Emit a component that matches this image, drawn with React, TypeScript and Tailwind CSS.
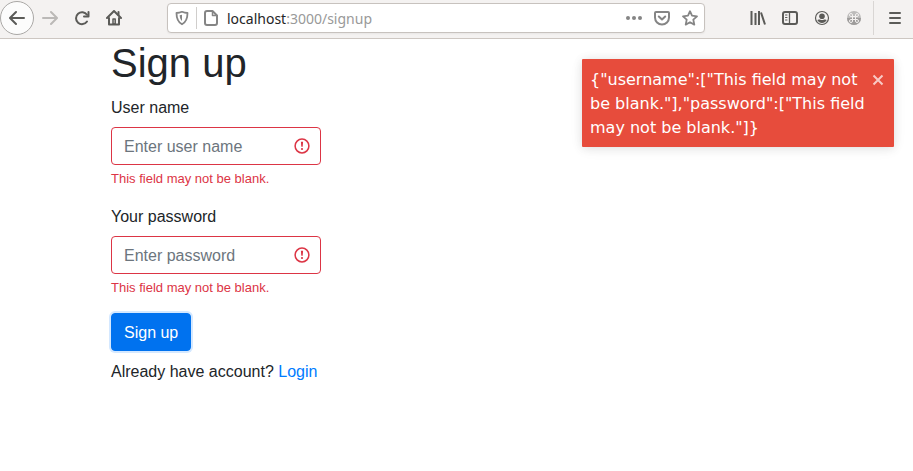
import { useId, useState, type ReactNode } from "react";

type IconButtonProps = { label: string; className?: string; children: ReactNode };

function IconButton({ label, className = "w-8", children }: IconButtonProps) {
  return (
    <button type="button" aria-label={label} className={`flex h-8 shrink-0 items-center justify-center ${className}`}>
      {children}
    </button>
  );
}

const stroke = {
  width: 16,
  height: 16,
  viewBox: "0 0 16 16",
  fill: "none",
  stroke: "currentColor",
  strokeWidth: 2,
  strokeLinecap: "round" as const,
  strokeLinejoin: "round" as const,
};

function Toolbar() {
  return (
    <header className="flex h-[39px] items-start border-b border-[#cdc7c2] bg-[#f4f2f1] pt-px text-[#5b5b58]">
      <button
        type="button"
        aria-label="Back"
        className="flex size-[34px] shrink-0 items-center justify-center rounded-full border border-[#aaa8a6] bg-[#fcfcfc]"
      >
        <svg {...stroke}>
          <path d="M15 8H1.500M7 2L1 8l6 6" />
        </svg>
      </button>
      <div className="flex pt-px">
        <IconButton label="Forward">
          <svg {...stroke} className="text-[#bbb9b7]">
            <path d="M1 8h13.500M9 2l6 6-6 6" />
          </svg>
        </IconButton>
        <IconButton label="Reload">
          <svg {...stroke}>
            <path d="M13 11.500A6 6 0 1 1 13 4.800" />
            <path d="M14.500 2v4.500H10" />
          </svg>
        </IconButton>
        <IconButton label="Home">
          <svg {...stroke}>
            <path d="M1 8l7-7 7 7" />
            <path d="M3 8v6.500h10V8" />
            <path d="M12.500 2v3" />
            <path d="M7 9h2.200v5H7z" strokeWidth="1.500" />
          </svg>
        </IconButton>
      </div>
      <div className="mx-[37px] mt-0.5 flex h-[30px] min-w-0 flex-1 items-center rounded border border-[#c7c2be] bg-white pl-1.5 text-[#858585] shadow-xs">
        <svg {...stroke} className="shrink-0">
          <path d="M8 1.800c1.800.8 3.700 1.200 5.500 1.200 0 5.600-1.200 9-5.500 11.300C3.700 12 2.500 8.600 2.500 3 4.300 3 6.200 2.600 8 1.800z" strokeWidth="1.800" />
          <path d="M8 4.800v6.200C6.300 9.700 5.800 7.600 5.700 5.300z" fill="currentColor" stroke="none" />
        </svg>
        <span className="mx-1.5 h-[22px] w-px shrink-0 bg-[#d0cecc]" />
        <svg {...stroke} className="shrink-0">
          <path d="M4 1h5.500L14 5.500V13a2 2 0 0 1-2 2H4a2 2 0 0 1-2-2V3a2 2 0 0 1 2-2z" />
          <path d="M9.500 1.500V5.500H13.500" strokeWidth="1.500" />
        </svg>
        <div className="ml-2 min-w-0 flex-1 truncate pt-px font-['Noto_Sans',sans-serif] text-[14px] leading-5 text-[#999]">
          <span className="text-[#252525]">localhost</span>:3000/signup
        </div>
        <div className="flex">
          <IconButton label="Page actions" className="w-7">
            <svg width="16" height="16" viewBox="0 0 16 16" fill="currentColor">
              <circle cx="2" cy="8" r="2" />
              <circle cx="8" cy="8" r="2" />
              <circle cx="14" cy="8" r="2" />
            </svg>
          </IconButton>
          <IconButton label="Save to Pocket" className="w-7">
            <svg {...stroke}>
              <path d="M2 2h12a1 1 0 0 1 1 1v4.500a7 7 0 0 1-14 0V3a1 1 0 0 1 1-1z" />
              <path d="M4.800 6.500L8 9.500l3.200-3" />
            </svg>
          </IconButton>
          <IconButton label="Bookmark this page" className="w-7">
            <svg {...stroke}>
              <path d="M8 1.200l2 4.500 5 .6-3.700 3.300 1 5L8 12.200l-4.300 2.400 1-5L1 6.300l5-.6z" strokeWidth="1.800" />
            </svg>
          </IconButton>
        </div>
      </div>
      <div className="flex pt-px">
        <IconButton label="Library">
          <svg {...stroke} strokeLinecap="butt">
            <path d="M1.500 1v14M5.500 3v12M9 1v14M11 2.500l4 12" />
          </svg>
        </IconButton>
        <IconButton label="Sidebars">
          <svg {...stroke}>
            <rect x="1" y="2" width="14" height="12" rx="2" />
            <path d="M7.500 2v12" strokeWidth="1.300" />
            <path d="M3.500 5h1.500M3.500 7.500h1.500M3.500 10h1.500" strokeWidth="1" />
          </svg>
        </IconButton>
        <IconButton label="Account">
          <svg {...stroke}>
            <circle cx="8" cy="8" r="6.500" strokeWidth="1.200" />
            <circle cx="8" cy="6.200" r="2.800" fill="currentColor" stroke="none" />
            <path d="M3.300 10c1.200-.5 2-.6 2.700-.6.800.9 3.200.9 4 0 .7 0 1.500.1 2.700.6-1 2-2.700 3-4.700 3s-3.700-1-4.700-3z" fill="currentColor" stroke="none" />
          </svg>
        </IconButton>
        <IconButton label="Extension">
          <svg width="16" height="16" viewBox="0 0 16 16" fill="none">
            <circle cx="8" cy="8" r="7" fill="#bdbcbb" />
            <path d="M1 8a7 7 0 0 0 14 0z" fill="#9e9c9b" />
            <path
              d="M6.500 6.500h3v3h-3zM6.500 6.500H5a1.500 1.500 0 1 1 1.500-1.500zM9.500 6.500V5a1.500 1.500 0 1 1 1.500 1.500zM6.500 9.500V11A1.500 1.500 0 1 1 5 9.500zM9.500 9.500H11A1.500 1.500 0 1 1 9.500 11z"
              stroke="#f4f2f1"
            />
          </svg>
        </IconButton>
      </div>
      <span className="mx-[3px] h-[34px] w-px shrink-0 bg-[#d9d6d4]" />
      <div className="pt-px">
        <IconButton label="Open menu" className="w-9">
          <svg {...stroke}>
            <path d="M3 3h10M3 8h10M3 13h10" />
          </svg>
        </IconButton>
      </div>
    </header>
  );
}

type FieldProps = { label: string; type: string; placeholder: string; error: string };

function Field({ label, type, placeholder, error }: FieldProps) {
  const id = useId();
  return (
    <div className="mb-4">
      <label htmlFor={id} className="mb-1.5 block leading-[26px]">
        {label}
      </label>
      <div className="relative">
        <input
          id={id}
          type={type}
          placeholder={placeholder}
          aria-invalid="true"
          aria-describedby={`${id}-error`}
          className="block h-[38px] w-full rounded border border-[#dc3545] bg-white pt-0.5 pr-9 pl-3 text-base text-[#495057] outline-none placeholder:text-[#6c757d]"
        />
        <svg
          className="pointer-events-none absolute inset-y-0 right-[11px] my-auto text-[#dc3545]"
          width="16"
          height="16"
          viewBox="0 0 16 16"
          fill="none"
        >
          <circle cx="8" cy="8" r="6.900" stroke="currentColor" strokeWidth="1.500" />
          <path d="M6.900 3.800h2.200l-.4 5H7.300z" fill="currentColor" />
          <circle cx="8" cy="11" r="1.100" fill="currentColor" />
        </svg>
      </div>
      <p id={`${id}-error`} className="mt-1 text-[13px] leading-[19px] text-[#dc3545]">
        {error}
      </p>
    </div>
  );
}

function Toast({ message, onClose }: { message: string; onClose: () => void }) {
  return (
    <div
      role="alert"
      className="absolute top-5 right-[19px] flex w-[312px] items-start rounded-[1px] bg-[#e74c3c] px-2 pt-[9px] pb-[7px] font-['DejaVu_Sans',sans-serif] text-base text-white shadow-[0_1px_10px_rgba(0,0,0,0.1),0_2px_15px_rgba(0,0,0,0.05)]"
    >
      <p className="min-w-0 flex-1">{message}</p>
      <button type="button" aria-label="Close" onClick={onClose} className="mt-1.5 mr-0.5 text-white/70">
        <svg width="12" height="12" viewBox="0 0 12 12" stroke="currentColor" strokeWidth="2">
          <path d="M1.500 1.500l9 9M10.500 1.500l-9 9" />
        </svg>
      </button>
    </div>
  );
}

export default function App() {
  const [toastOpen, setToastOpen] = useState(true);
  const blank = "This field may not be blank.";
  return (
    <div className="min-h-screen bg-white font-['Liberation_Sans',Arial,sans-serif] text-base text-[#212529]">
      <Toolbar />
      <div className="relative">
        <main className="mx-auto max-w-[721px] px-[15px]">
          <div className="w-[210px]">
            <h1 className="mb-2 text-[40px] leading-[48px]">Sign up</h1>
            <form noValidate onSubmit={(event) => event.preventDefault()}>
              <Field label="User name" type="text" placeholder="Enter user name" error={blank} />
              <Field label="Your password" type="password" placeholder="Enter password" error={blank} />
              <button
                type="submit"
                className="block h-[38px] rounded border border-[#0072ef] bg-[#0072ef] px-3 pt-0.5 text-white shadow-[0_0_0_2px_#d4e8ff] outline-none"
              >
                Sign up
              </button>
            </form>
            <p className="mt-2 leading-[26px] whitespace-nowrap">
              Already have account?{" "}
              <a href="#login" className="text-[#007bff]">
                Login
              </a>
            </p>
          </div>
        </main>
        {toastOpen && (
          <Toast
            message={'{"username":["This field may not be blank."],"password":["This field may not be blank."]}'}
            onClose={() => setToastOpen(false)}
          />
        )}
      </div>
    </div>
  );
}
